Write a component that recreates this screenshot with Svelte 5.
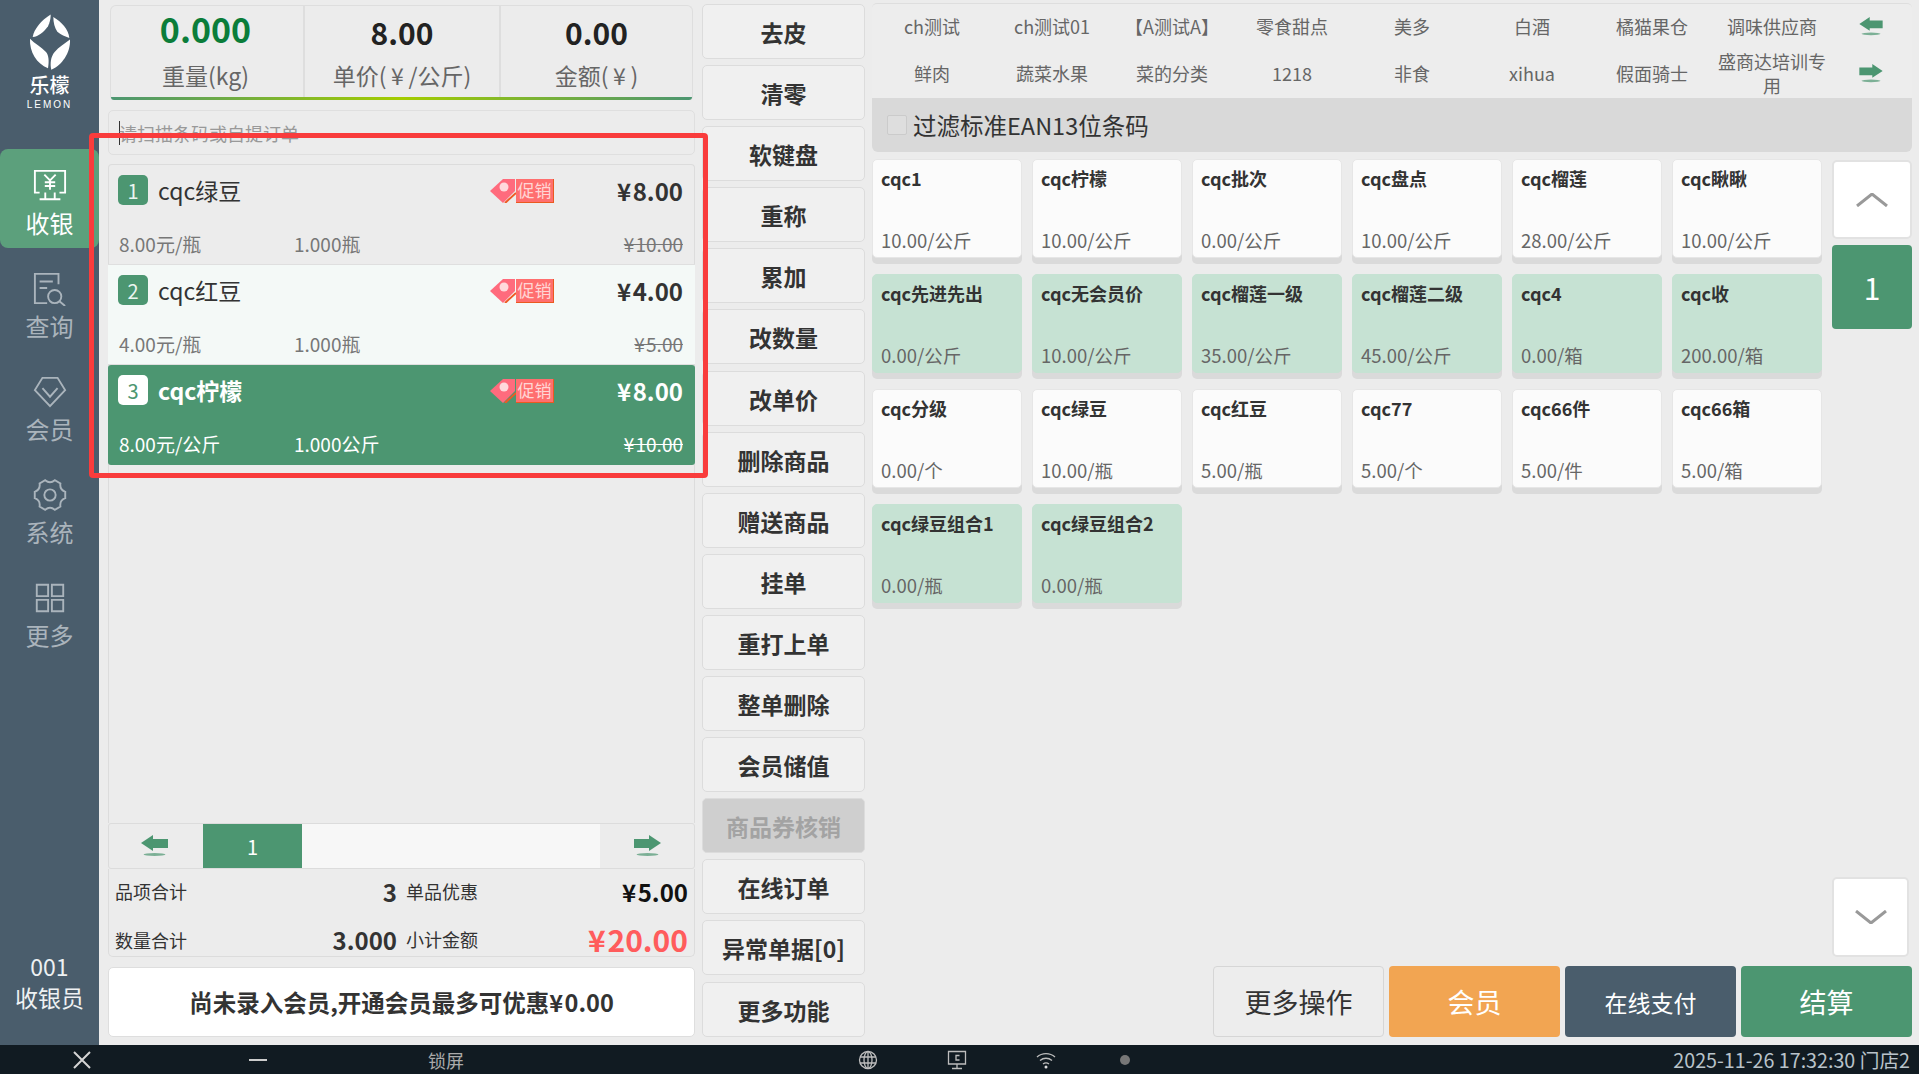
<script>
  const menu = ['收银', '查询', '会员', '系统', '更多'];
  const rows = [
    { n: 1, name: 'cqc绿豆', price: '8.00', unit: '8.00元/瓶', qty: '1.000瓶', old: '10.00', cls: '' },
    { n: 2, name: 'cqc红豆', price: '4.00', unit: '4.00元/瓶', qty: '1.000瓶', old: '5.00', cls: 'light' },
    { n: 3, name: 'cqc柠檬', price: '8.00', unit: '8.00元/公斤', qty: '1.000公斤', old: '10.00', cls: 'sel' }
  ];
  const actions = ['去皮', '清零', '软键盘', '重称', '累加', '改数量', '改单价', '删除商品', '赠送商品', '挂单', '重打上单', '整单删除', '会员储值', '商品券核销', '在线订单', '异常单据[0]', '更多功能'];
  const catsA = ['ch测试', 'ch测试01', '【A测试A】', '零食甜点', '美多', '白酒', '橘猫果仓', '调味供应商'];
  const catsB = ['鲜肉', '蔬菜水果', '菜的分类', '1218', '非食', 'xihua', '假面骑士', '盛商达培训专用'];
  const goods = [
    ['cqc1', '10.00/公斤', 0], ['cqc柠檬', '10.00/公斤', 0], ['cqc批次', '0.00/公斤', 0], ['cqc盘点', '10.00/公斤', 0], ['cqc榴莲', '28.00/公斤', 0], ['cqc瞅瞅', '10.00/公斤', 0],
    ['cqc先进先出', '0.00/公斤', 1], ['cqc无会员价', '10.00/公斤', 1], ['cqc榴莲一级', '35.00/公斤', 1], ['cqc榴莲二级', '45.00/公斤', 1], ['cqc4', '0.00/箱', 1], ['cqc收', '200.00/箱', 1],
    ['cqc分级', '0.00/个', 0], ['cqc绿豆', '10.00/瓶', 0], ['cqc红豆', '5.00/瓶', 0], ['cqc77', '5.00/个', 0], ['cqc66件', '5.00/件', 0], ['cqc66箱', '5.00/箱', 0],
    ['cqc绿豆组合1', '0.00/瓶', 1], ['cqc绿豆组合2', '0.00/瓶', 1]
  ];
  function pt(r, deg) {
    const a = (deg * Math.PI) / 180;
    return (18 + r * Math.cos(a)).toFixed(2) + ' ' + (18 + r * Math.sin(a)).toFixed(2);
  }
  let gear = 'M' + pt(16.5, -12);
  for (let i = 0; i < 6; i++) {
    const a = i * 60;
    gear += ' L' + pt(16.5, a + 12) + ' Q' + pt(11.5, a + 30) + ' ' + pt(16.5, a + 48);
  }
  gear += 'Z';
</script>

{#snippet arrowL()}
  <svg class="arrow" viewBox="0 0 27 22"><polygon points="0,8 12,0 12,4 27,4 27,13 12,13 12,16" /><ellipse cx="13.5" cy="19.5" rx="11" ry="1.5" opacity=".7" /></svg>
{/snippet}
{#snippet arrowR()}
  <svg class="arrow" viewBox="0 0 27 22"><polygon points="27,8 15,0 15,4 0,4 0,13 15,13 15,16" /><ellipse cx="13.5" cy="19.5" rx="11" ry="1.5" opacity=".7" /></svg>
{/snippet}

<div class="app">
  <div class="main">
    <aside class="side">
      <div class="brand">
        <svg class="logo" viewBox="0 0 180 180" preserveAspectRatio="none">
          <path d="M92 22C62 38 42 60 38 80C56 78 72 66 84 52C90 42 92 32 92 22Z" />
          <path d="M100 28C100 42 104 56 112 66C122 74 136 78 148 82C146 60 124 40 100 28Z" />
          <path d="M30 84C28 118 50 148 84 160C88 140 86 126 78 118C64 106 44 96 30 84Z" />
          <path d="M150 86C134 96 116 106 104 118C92 130 90 148 94 164C126 152 152 120 150 86Z" />
        </svg>
        <div class="bname">乐檬</div>
        <div class="lemon">LEMON</div>
      </div>
      <nav class="menu">
        {#each menu as m, i}
          <div class="mi" class:on={i === 0}>
            <svg class="mic" viewBox="0 0 36 36">
              {#if i === 0}
                <path d="M7 25H2V2H34V25H28M13 25V31M23 25V31M7 32H29M12 6L18 12L24 6M18 12V22M12.500 14H23.500M12.500 18H23.500" />
              {:else if i === 1}
                <path d="M27 13V2H2V33H15M7 10H21M7 17H15" /><circle cx="23" cy="26" r="7" /><path d="M28 31L34 36" />
              {:else if i === 2}
                <path d="M10 3H26L34 16L18 33L2 16ZM10 14L18 23L26 14" />
              {:else if i === 3}
                <path d={gear} /><circle cx="18" cy="18" r="6" />
              {:else}
                <path d="M4 4H16V16H4ZM20 4H32V16H20ZM4 20H16V32H4ZM20 20H32V32H20Z" />
              {/if}
            </svg>
            <span>{m}</span>
          </div>
        {/each}
      </nav>
      <div class="cashier"><div>001</div><div>收银员</div></div>
    </aside>

    <section class="left">
      <div class="scale">
        <div class="cells">
          <div class="cell"><b class="w">0.000</b><span>重量(kg)</span></div>
          <div class="cell"><b>8.00</b><span>单价(&#8201;¥&#8201;/公斤)</span></div>
          <div class="cell"><b>0.00</b><span>金额(&#8201;¥&#8201;)</span></div>
        </div>
        <div class="bar"></div>
      </div>
      <div class="search"><span class="caret"></span><span class="ph">请扫描条码或自提订单</span></div>
      <div class="list">
        {#each rows as r}
          <div class="row {r.cls}">
            <div class="rtop">
              <span class="num">{r.n}</span>
              <span class="name">{r.name}</span>
              <span class="promo">
                <svg class="ptag" viewBox="0 0 26 24">
                  <polygon points="0,12 13,0 25,0 25,12 13,24" fill="#ff6b7d" />
                  <circle cx="14" cy="8" r="4.500" fill="#ffd9dc" />
                  <path d="M15 24L26 14" stroke="#ee5a24" stroke-width="2" />
                </svg>
                <span class="ptext">促销</span>
              </span>
              <span class="price">¥&#8202;{r.price}</span>
            </div>
            <div class="rsub">
              <span class="unit">{r.unit}</span>
              <span>{r.qty}</span>
              <s>¥&#8202;{r.old}</s>
            </div>
          </div>
        {/each}
      </div>
      <div class="pager">
        <div class="parrow">{@render arrowL()}</div>
        <div class="pnum">1</div>
        <div class="ptrack"></div>
        <div class="parrow">{@render arrowR()}</div>
      </div>
      <div class="sum">
        <div class="sl"><span>品项合计</span><b>3</b></div>
        <span class="sm">单品优惠</span>
        <b class="sr">¥&#8202;5.00</b>
        <div class="sl low"><span>数量合计</span><b>3.000</b></div>
        <span class="sm low">小计金额</span>
        <b class="sr red">¥&#8202;20.00</b>
      </div>
      <div class="member">尚未录入会员,开通会员最多可优惠¥&#8202;0.00</div>
    </section>

    <section class="actions">
      {#each actions as a}
        <div class="act" class:off={a === '商品券核销'}>{a}</div>
      {/each}
    </section>

    <section class="right">
      <div class="cats">
        {#each catsA as c}<div class="cat">{c}</div>{/each}
        <div class="cat">{@render arrowL()}</div>
        {#each catsB as c}<div class="cat">{c}</div>{/each}
        <div class="cat">{@render arrowR()}</div>
      </div>
      <div class="filter"><span class="check"></span><span>过滤标准EAN13位条码</span></div>
      <div class="body">
        <div class="goods">
          {#each goods as g}
            <div class="good" class:g={g[2]}>
              <b>{g[0]}</b>
              <span>{g[1]}</span>
            </div>
          {/each}
        </div>
        <div class="scroll">
          <div class="sbtn"><svg viewBox="0 0 32 14"><path d="M1 13L16 1L31 13" /></svg></div>
          <div class="spage">1</div>
          <div class="sbtn down"><svg viewBox="0 0 32 14"><path d="M1 1L16 13L31 1" /></svg></div>
        </div>
      </div>
      <div class="foot">
        <div class="fb more">更多操作</div>
        <div class="fb orange">会员</div>
        <div class="fb slate">在线支付</div>
        <div class="fb green">结算</div>
      </div>
    </section>
  </div>

  <footer class="status">
    <svg class="ix" viewBox="0 0 18 18"><path d="M1 1L17 17M17 1L1 17" /></svg>
    <span class="dash"></span>
    <span class="lock">锁屏</span>
    <svg class="ic globe" viewBox="0 0 20 20"><circle cx="10" cy="10" r="8.500" /><ellipse cx="10" cy="10" rx="4" ry="8.500" /><path d="M2 7H18M2 13H18M10 1.500V18.500" /></svg>
    <svg class="ic mon" viewBox="0 0 20 20"><path d="M1.500 1.500H18.500V14H1.500ZM10 14V18M5 18.500H15M12.500 5.500H9V10H12.500" /></svg>
    <svg class="ic wifi" viewBox="0 0 20 20"><path d="M1 7C6 2.500 14 2.500 19 7M4 10.500C7.500 7.500 12.500 7.500 16 10.500M7 14C9 12.500 11 12.500 13 14" /><circle class="fill" cx="10" cy="17" r="1.500" /></svg>
    <span class="dot"></span>
    <span class="time">2025-11-26 17:32:30 门店2</span>
  </footer>

  <div class="redbox"></div>
</div>

<style>
  :global(body) { margin: 0; }
  .app { position: relative; width: 1919px; height: 1074px; display: flex; flex-direction: column; overflow: hidden; background: #ececec; color: #333; font-family: "Noto Sans CJK SC", "Noto Sans", sans-serif; }
  .main { display: flex; height: 1045px; }

  .side { width: 99px; flex: none; display: flex; flex-direction: column; align-items: stretch; background: #4a5d6c; color: #aab4bc; }
  .brand { height: 149px; box-sizing: border-box; padding-top: 6px; display: flex; flex-direction: column; align-items: center; color: #fff; }
  .logo { width: 60px; height: 70px; flex: none; fill: #fff; display: block; }
  .bname { font-family: "Liberation Sans", "Noto Sans CJK SC", sans-serif; font-size: 20px; line-height: 22px; margin-top: -1px; font-weight: 500; }
  .lemon { font-size: 10px; line-height: 11px; letter-spacing: 2px; margin-top: 2px; font-family: "Liberation Sans", sans-serif; }
  .menu { display: flex; flex-direction: column; gap: 4px; }
  .mi { height: 99px; box-sizing: border-box; padding-top: 20px; display: flex; flex-direction: column; align-items: center; border-radius: 8px 0 0 8px; font-size: 24px; line-height: 36px; }
  .mi span { margin-top: 2px; }
  .mi.on { background: #5ca07c; color: #fff; border-radius: 8px; }
  .mic { width: 34px; height: 34px; fill: none; stroke: currentColor; stroke-width: 2; display: block; }
  .cashier { margin-top: auto; margin-bottom: 32px; text-align: center; color: #eef1f3; font-size: 23px; line-height: 31px; }

  .left { width: 587px; flex: none; margin-left: 9px; padding-bottom: 8px; box-sizing: border-box; display: flex; flex-direction: column; }
  .scale { margin: 5px 2px 0 2px; height: 95px; box-sizing: border-box; display: flex; flex-direction: column; border: 1px solid #dedede; border-bottom: 0; border-radius: 6px 6px 4px 4px; }
  .cells { flex: 1; display: flex; }
  .cell { flex: 1; box-sizing: border-box; display: flex; flex-direction: column; align-items: center; border-left: 2px solid #dedede; }
  .cell:first-child { border-left: 0; flex: 0 0 192px; padding-right: 3px; }
  .cell:nth-child(2) { flex: 0 0 196px; }
  .cell b { font-size: 30px; line-height: 36px; margin-top: 8px; color: #222; }
  .cell b.w { font-size: 34px; line-height: 40px; margin-top: 3px; margin-bottom: 1px; color: #0b7d3a; }
  .cell span { font-size: 23px; line-height: 30px; margin-top: 10px; color: #666; }
  .bar { height: 3px; border-radius: 0 0 3px 3px; background: linear-gradient(90deg, #4c9671, #a4cc00 50%, #4c9671); }

  .search { margin-top: 10px; height: 45px; box-sizing: border-box; display: flex; align-items: center; gap: 0; padding-left: 10px; border: 1px solid #dfdfdf; border-radius: 5px; }
  .caret { width: 1px; height: 24px; margin-right: -1px; background: #333; }
  .ph { font-size: 18px; color: #999; }

  .list { flex: 1; margin-top: 9px; border: 1px solid #dcdcdc; border-bottom: 0; border-radius: 4px 4px 0 0; }
  .row { height: 100px; box-sizing: border-box; margin: 0 -1px; padding: 10px 12px 0 10px; border-bottom: 1px solid #dfdfdf; }
  .rtop { display: flex; align-items: center; height: 30px; }
  .num { width: 30px; height: 30px; display: flex; align-items: center; justify-content: center; border-radius: 5px; background: #4c9671; color: #eaf5ef; font-size: 20px; }
  .name { flex: 1; margin-left: 10px; font-size: 23px; color: #333; }
  .promo { display: flex; align-items: stretch; height: 24px; margin-top: 1px; }
  .ptag { width: 26px; height: 24px; display: block; }
  .ptext { width: 38px; box-sizing: border-box; text-align: center; font-size: 17px; line-height: 22px; color: #ffd5d5; background: #ff6f6f; border-right: 1px solid #ea5a20; border-bottom: 1px solid #ea5a20; }
  .price { width: 129px; text-align: right; font-size: 24px; font-weight: 700; color: #333; }
  .rsub { display: flex; align-items: center; height: 26px; margin-top: 25px; padding-left: 1px; font-size: 19px; color: #777; }
  .unit { width: 175px; }
  .rsub s { margin-left: auto; color: #777; }
  .row.light { background: #f4f9f7; }
  .row.sel { background: #4c9671; border-bottom: 0; border-radius: 3px; color: #fff; }
  .row.sel .num { background: #fff; color: #4c9671; }
  .row.sel .name { color: #fff; font-weight: 700; }
  .row.sel .price, .row.sel .rsub, .row.sel s { color: #fff; }

  .pager { display: flex; height: 46px; flex: none; box-sizing: border-box; border: 1px solid #dcdcdc; border-radius: 3px; }
  .parrow { width: 94px; display: flex; align-items: center; justify-content: center; }
  .parrow:first-child { padding-right: 3px; box-sizing: border-box; }
  .arrow { width: 27px; height: 22px; fill: #4c9671; display: block; }
  .pnum { width: 99px; display: flex; align-items: center; justify-content: center; background: #4c9671; color: #fff; font-size: 20px; }
  .ptrack { flex: 1; background: #f7f7f7; }

  .sum { height: 88px; flex: none; box-sizing: border-box; padding: 0 6px; display: grid; grid-template-columns: 282px 82px 1fr; grid-template-rows: 44px 44px; align-items: center; column-gap: 9px; border: 1px solid #dcdcdc; border-top: 0; border-radius: 0 0 5px 5px; font-size: 18px; }
  .sl { display: flex; justify-content: space-between; align-items: center; }
  .sl b { font-size: 24px; color: #333; }
  .sl.low { align-self: end; }
  .sm.low { align-self: end; padding-bottom: 5px; }
  .sr { justify-self: end; font-size: 24px; color: #111; }
  .sr.red { align-self: end; font-size: 30px; line-height: 36px; color: #ff5c5c; }

  .member { margin-top: 10px; height: 70px; flex: none; display: flex; align-items: center; justify-content: center; background: #fff; border: 1px solid #dedede; box-sizing: border-box; border-radius: 5px; font-size: 23.5px; font-weight: 700; color: #333; }

  .actions { width: 163px; flex: none; margin-left: 7px; padding-top: 4px; display: flex; flex-direction: column; gap: 6.1px; }
  .act { height: 55px; flex: none; box-sizing: border-box; display: flex; align-items: center; justify-content: center; background: #f0f0f0; border: 1px solid #dcdcdc; border-radius: 5px; font-size: 23px; font-weight: 700; color: #333; padding-top: 1px; }
  .act.off { background: #cfcfcf; color: #a3a3a3; }

  .right { width: 1040px; flex: none; margin-left: 7px; display: flex; flex-direction: column; }
  .cats { margin-top: 3px; height: 95px; flex: none; display: grid; grid-template-columns: repeat(8, 120px) 78px; grid-template-rows: 1fr 1fr; background: #ededed; border-top: 1px solid #dedede; box-sizing: border-box; border-radius: 5px 5px 0 0; }
  .cat { display: flex; align-items: center; justify-content: center; text-align: center; padding: 0 6px 1px; font-size: 18px; line-height: 24px; color: #666; }
  .cat .arrow { width: 24px; height: 19px; margin-top: 1px; }
  .filter { height: 54px; flex: none; display: flex; align-items: center; padding-left: 15px; gap: 6px; background: #d9d9d9; border-radius: 0 0 6px 6px; font-size: 23.5px; color: #333; }
  .check { width: 20px; height: 20px; box-sizing: border-box; background: #dedede; border: 1px solid #cbcbcb; border-radius: 2px; }
  .body { flex: 1; margin-top: 7px; display: flex; min-height: 0; }
  .goods { width: 950px; display: grid; grid-template-columns: repeat(6, 150px); grid-auto-rows: 99px; gap: 16px 10px; align-content: start; }
  .good { box-sizing: border-box; padding: 4px 8px 3px 8px; display: flex; flex-direction: column; justify-content: space-between; background: #fbfbfb; border: 1px solid #e6e6e6; border-radius: 5px; box-shadow: 0 6px 0 #dadada; font-size: 18px; }
  .good b { line-height: 28px; color: #333; }
  .good span { line-height: 28px; font-size: 18.5px; color: #666; }
  .good.g { background: #c6e2d3; border-color: #c6e2d3; }
  .scroll { margin-left: 10px; width: 80px; display: flex; flex-direction: column; padding-top: 1px; }
  .sbtn { width: 77px; height: 80px; flex: none; box-sizing: border-box; display: flex; align-items: center; justify-content: center; background: #fff; border: 2px solid #e2e2e2; border-radius: 5px; }
  .sbtn svg { width: 32px; height: 14px; fill: none; stroke: #999; stroke-width: 3; }
  .sbtn:first-child { width: 80px; height: 79px; }
  .spage { margin-top: 6px; height: 84px; flex: none; display: flex; align-items: center; justify-content: center; background: #4c9671; border-radius: 4px; color: #fff; font-size: 30px; }
  .down { margin-top: auto; }
  .foot { margin-top: 9px; margin-bottom: 8px; height: 71px; flex: none; display: flex; gap: 5px; }
  .fb { flex: 0 0 171px; box-sizing: border-box; display: flex; align-items: center; justify-content: center; border-radius: 4px; color: #fff; font-size: 27px; }
  .more { margin-left: 341px; background: #ededed; border: 1px solid #d6d6d6; color: #333; }
  .orange { background: #f2a552; }
  .slate { background: #4a5d6c; font-size: 23px; }
  .green { background: #4c9671; }

  .status { height: 29px; display: flex; align-items: center; background: #111b22; color: #b9c3ca; font-size: 18px; }
  .ix { width: 18px; height: 18px; margin-left: 73px; fill: none; stroke: #d5d5d5; stroke-width: 2; }
  .dash { width: 18px; height: 2px; margin-left: 158px; background: #ccc; }
  .lock { margin-left: 161px; color: #aaa; }
  .ic { width: 20px; height: 20px; fill: none; stroke: #bdbdbd; stroke-width: 1.300; }
  .ic .fill { fill: #ddd; stroke: none; }
  .globe { margin-left: 394px; }
  .mon { margin-left: 69px; }
  .wifi { margin-left: 69px; }
  .dot { width: 10px; height: 10px; margin-left: 64px; border-radius: 50%; background: #777; }
  .time { margin-left: auto; margin-right: 9px; font-size: 19.7px; }

  .redbox { position: absolute; left: 89px; top: 133px; width: 619px; height: 345px; box-sizing: border-box; border: 5px solid #f93c3c; border-radius: 4px; pointer-events: none; }
</style>
